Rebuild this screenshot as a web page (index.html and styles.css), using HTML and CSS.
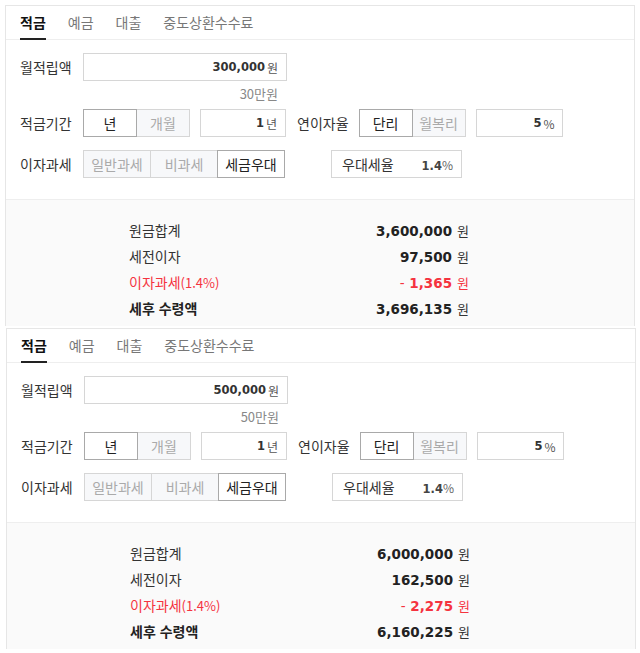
FILE: index.html
```html
<!DOCTYPE html>
<html lang="ko">
<head>
<meta charset="utf-8">
<title>적금 계산기</title>
<link rel="stylesheet" href="styles.css">
</head>
<body>
<div class="page">
  <section class="calc">
    <nav class="tabs">
      <span class="tab active">적금</span>
      <span class="tab">예금</span>
      <span class="tab">대출</span>
      <span class="tab">중도상환수수료</span>
    </nav>
    <div class="form">
      <div class="row">
        <span class="label">월적립액</span>
        <div class="field amount"><b class="num">300,000</b><span class="unit">원</span></div>
      </div>
      <div class="hint">30만원</div>
      <div class="row">
        <span class="label">적금기간</span>
        <div class="seg"><span class="opt on">년</span><span class="opt">개월</span></div>
        <div class="field short"><b class="num">1</b><span class="unit">년</span></div>
        <span class="label label-mid">연이자율</span>
        <div class="seg seg-mid"><span class="opt on">단리</span><span class="opt">월복리</span></div>
        <div class="field rate"><b class="num">5</b><span class="unit">%</span></div>
      </div>
      <div class="row row-tax">
        <span class="label">이자과세</span>
        <div class="seg seg-wide"><span class="opt">일반과세</span><span class="opt">비과세</span><span class="opt on">세금우대</span></div>
        <div class="pref"><span class="pref-name">우대세율</span><span class="pref-val"><b class="num">1.4</b><span class="pct">%</span></span></div>
      </div>
    </div>
    <div class="result">
      <div class="res-row"><span class="res-label">원금합계</span><span class="res-val"><b>3,600,000</b><span class="won">원</span></span></div>
      <div class="res-row"><span class="res-label">세전이자</span><span class="res-val"><b>97,500</b><span class="won">원</span></span></div>
      <div class="res-row minus"><span class="res-label">이자과세<span class="paren">(1.4%)</span></span><span class="res-val"><b><span class="dash">-</span> 1,365</b><span class="won">원</span></span></div>
      <div class="res-row total"><span class="res-label">세후 수령액</span><span class="res-val"><b>3,696,135</b><span class="won">원</span></span></div>
    </div>
  </section>

  <section class="calc calc-shift">
    <nav class="tabs">
      <span class="tab active">적금</span>
      <span class="tab">예금</span>
      <span class="tab">대출</span>
      <span class="tab">중도상환수수료</span>
    </nav>
    <div class="form">
      <div class="row">
        <span class="label">월적립액</span>
        <div class="field amount"><b class="num">500,000</b><span class="unit">원</span></div>
      </div>
      <div class="hint">50만원</div>
      <div class="row">
        <span class="label">적금기간</span>
        <div class="seg"><span class="opt on">년</span><span class="opt">개월</span></div>
        <div class="field short"><b class="num">1</b><span class="unit">년</span></div>
        <span class="label label-mid">연이자율</span>
        <div class="seg seg-mid"><span class="opt on">단리</span><span class="opt">월복리</span></div>
        <div class="field rate"><b class="num">5</b><span class="unit">%</span></div>
      </div>
      <div class="row row-tax">
        <span class="label">이자과세</span>
        <div class="seg seg-wide"><span class="opt">일반과세</span><span class="opt">비과세</span><span class="opt on">세금우대</span></div>
        <div class="pref"><span class="pref-name">우대세율</span><span class="pref-val"><b class="num">1.4</b><span class="pct">%</span></span></div>
      </div>
    </div>
    <div class="result">
      <div class="res-row"><span class="res-label">원금합계</span><span class="res-val"><b>6,000,000</b><span class="won">원</span></span></div>
      <div class="res-row"><span class="res-label">세전이자</span><span class="res-val"><b>162,500</b><span class="won">원</span></span></div>
      <div class="res-row minus"><span class="res-label">이자과세<span class="paren">(1.4%)</span></span><span class="res-val"><b><span class="dash">-</span> 2,275</b><span class="won">원</span></span></div>
      <div class="res-row total"><span class="res-label">세후 수령액</span><span class="res-val"><b>6,160,225</b><span class="won">원</span></span></div>
    </div>
  </section>
</div>
</body>
</html>
```

FILE: styles.css
```css
html, body {
  margin: 0;
  padding: 0;
  background: #fff;
}
body {
  font-family: "Noto Sans CJK KR", "Noto Sans", sans-serif;
  color: #333;
}
.page {
  padding: 5px 0 0 5px;
}
.calc {
  width: 630px;
  box-sizing: border-box;
  border: 1px solid #e6e6e6;
  border-bottom: 0;
  margin-bottom: 2px;
}
.calc-shift {
  margin-left: 1px;
}

/* tabs */
.tabs {
  display: flex;
  gap: 22px;
  height: 33px;
  padding-left: 14px;
  border-bottom: 1px solid #eee;
}
.tab {
  position: relative;
  font-size: 14px;
  line-height: 33px;
  color: #777;
}
.tab.active {
  color: #111;
  font-weight: 700;
}
.tab.active::after {
  content: "";
  position: absolute;
  left: 0;
  right: 0;
  bottom: -1px;
  height: 2px;
  background: #222;
}

/* form */
.form {
  padding: 13px 0 21px 14px;
  border-bottom: 1px solid #eee;
}
.row {
  display: flex;
  align-items: center;
  height: 28px;
}
.row-tax {
  margin-top: 13px;
}
.label {
  flex: none;
  width: 63px;
  font-size: 14px;
  color: #333;
}
.label-mid {
  width: auto;
  margin-left: 11px;
}
.field {
  box-sizing: border-box;
  height: 28px;
  border: 1px solid #d6d6d6;
  background: #fff;
  display: flex;
  align-items: center;
  justify-content: flex-end;
  padding-right: 8px;
}
.amount { width: 204px; }
.short { width: 86px; margin-left: 10px; }
.rate { width: 87px; margin-left: 10px; padding-right: 7px; }
.num {
  font-family: "DejaVu Sans", sans-serif;
  font-weight: 700;
  font-size: 11.5px;
  color: #333;
}
.unit {
  margin-left: 2px;
  font-size: 12px;
  color: #555;
}
.hint {
  box-sizing: border-box;
  width: 204px;
  height: 28px;
  margin-left: 63px;
  padding-right: 9px;
  line-height: 26px;
  text-align: right;
  font-size: 13px;
  color: #888;
}

/* segmented toggles */
.seg {
  display: flex;
  flex: none;
}
.seg-mid {
  margin-left: 10px;
}
.opt {
  position: relative;
  box-sizing: border-box;
  width: 54px;
  height: 28px;
  line-height: 26px;
  text-align: center;
  font-size: 14px;
  color: #aaa;
  background: #f7f8fa;
  border: 1px solid #d6d6d6;
}
.opt + .opt {
  margin-left: -1px;
}
.opt.on {
  z-index: 1;
  background: #fff;
  color: #222;
  border-color: #a9a9a9;
}
.seg-wide .opt {
  width: 68px;
}

.pref {
  box-sizing: border-box;
  width: 131px;
  height: 28px;
  margin-left: 46px;
  padding: 0 8px 0 10px;
  border: 1px solid #d6d6d6;
  display: flex;
  align-items: center;
  justify-content: space-between;
  font-size: 14px;
  color: #333;
}
.pref-val .num { color: #444; }
.pct {
  font-size: 12px;
  color: #666;
}

/* results */
.result {
  background: #fafafa;
  padding: 17px 0 5px 123px;
}
.res-row {
  display: flex;
  align-items: center;
  justify-content: space-between;
  width: 340px;
  height: 26px;
  font-size: 14px;
  color: #333;
}
.paren {
  font-size: 13px;
}
.res-val b {
  font-family: "DejaVu Sans", sans-serif;
  font-weight: 700;
  font-size: 13.5px;
  color: #222;
}
.won {
  margin-left: 5px;
  font-size: 13px;
  color: #333;
}
.res-row.minus,
.res-row.minus .res-val b,
.res-row.minus .won {
  color: #f5333f;
}
.dash {
  font-weight: 400;
}
.res-row.total .res-label {
  font-weight: 700;
  color: #222;
}
```
